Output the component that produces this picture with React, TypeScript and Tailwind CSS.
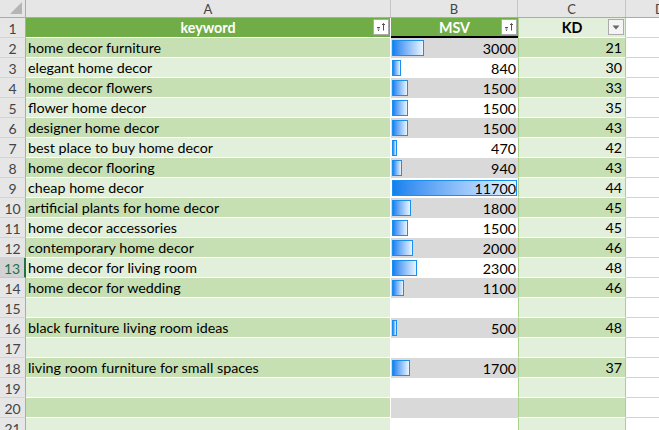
import React from "react";

type Row = { kw?: string; msv?: number; kd?: number };

const rows: Row[] = [
  { kw: "home decor furniture", msv: 3000, kd: 21 },
  { kw: "elegant home decor", msv: 840, kd: 30 },
  { kw: "home decor flowers", msv: 1500, kd: 33 },
  { kw: "flower home decor", msv: 1500, kd: 35 },
  { kw: "designer home decor", msv: 1500, kd: 43 },
  { kw: "best place to buy home decor", msv: 470, kd: 42 },
  { kw: "home decor flooring", msv: 940, kd: 43 },
  { kw: "cheap home decor", msv: 11700, kd: 44 },
  { kw: "artificial plants for home decor", msv: 1800, kd: 45 },
  { kw: "home decor accessories", msv: 1500, kd: 45 },
  { kw: "contemporary home decor", msv: 2000, kd: 46 },
  { kw: "home decor for living room", msv: 2300, kd: 48 },
  { kw: "home decor for wedding", msv: 1100, kd: 46 },
  {},
  { kw: "black furniture living room ideas", msv: 500, kd: 48 },
  {},
  { kw: "living room furniture for small spaces", msv: 1700, kd: 37 },
  {},
  {},
  {},
];

const MAX = 11700;

function SortButton() {
  return (
    <div className="absolute right-[1px] top-[1px] w-[16px] h-[16px] bg-white border border-[#ababab] flex items-center justify-center">
      <svg width="12" height="12" viewBox="0 0 12 12">
        <path d="M2 6.5h3M2.5 8h2M3 9.5h1" stroke="#555" strokeWidth="1" />
        <path d="M8.5 2.5v7M7 4l1.5-1.5L10 4" stroke="#555" strokeWidth="1" fill="none" />
      </svg>
    </div>
  );
}

function DropButton() {
  return (
    <div className="absolute right-[1px] top-[1px] w-[16px] h-[16px] bg-[#f4f4f4] border border-[#ababab] flex items-center justify-center">
      <svg width="8" height="5" viewBox="0 0 8 5">
        <path d="M0.5 0.5h7L4 4.5z" fill="#666" />
      </svg>
    </div>
  );
}

export default function App() {
  return (
    <div
      className="w-[659px] h-[430px] overflow-hidden bg-white text-black text-[14.3px] leading-none"
      style={{ fontFamily: "Lato, 'Open Sans', sans-serif" }}
    >
      {/* column headers */}
      <div className="flex h-[18px] bg-[#e6e6e6] border-b border-[#ababab] text-[#444] text-[13px]">
        <div className="w-[26px] shrink-0 relative border-r border-[#ababab]">
          <div className="absolute right-[3px] bottom-[3px] w-0 h-0 border-l-[12px] border-l-transparent border-b-[12px] border-b-[#b5b5b5]" />
        </div>
        <div className="w-[365px] shrink-0 flex items-center justify-center pt-[1px] border-r border-[#c6c6c6]">A</div>
        <div className="w-[127px] shrink-0 flex items-center justify-center pt-[1px] border-r border-[#c6c6c6]">B</div>
        <div className="w-[108px] shrink-0 flex items-center justify-center pt-[1px] border-r border-[#c6c6c6]">C</div>
        <div className="flex-1 pl-[29px] pt-[1px] flex items-center">D</div>
      </div>

      {/* row 1: table header */}
      <div className="flex h-[20px]">
        <div className="w-[26px] shrink-0 bg-[#e6e6e6] border-r border-[#ababab] border-b border-b-[#d4d4d4] flex items-center justify-center pt-[2px] text-[14px] text-[#444]">
          1
        </div>
        <div className="w-[365px] shrink-0 relative bg-[#70ad47] border-r border-white border-b border-b-white flex items-center justify-center pt-[2px] font-bold text-white">
          keyword
          <SortButton />
        </div>
        <div className="w-[127px] shrink-0 relative bg-[#70ad47] border-b-2 border-b-black flex items-center justify-center pt-[2px] font-bold text-white">
          MSV
          <SortButton />
        </div>
        <div className="w-[108px] shrink-0 relative bg-[#e2efda] border-x border-[#a9d08e] border-b border-b-white flex items-center justify-center pt-[2px] font-bold">
          KD
          <DropButton />
        </div>
        <div className="flex-1 border-b border-[#d4d4d4]" />
      </div>

      {rows.map((r, i) => {
        const n = i + 2;
        const even = n % 2 === 0;
        const active = n === 13;
        return (
          <div key={n} className="flex h-[20px]">
            <div
              className={
                active
                  ? "w-[26px] shrink-0 bg-[#d2d2d2] border-r-2 border-[#217346] border-b border-b-[#c6c6c6] flex items-center justify-center pt-[2px] text-[14px] text-[#217346]"
                  : "w-[26px] shrink-0 bg-[#e6e6e6] border-r border-[#ababab] border-b border-b-[#d4d4d4] flex items-center justify-center pt-[2px] text-[14px] text-[#444]"
              }
            >
              {n}
            </div>
            <div
              className={
                (even ? "bg-[#c6e0b4]" : "bg-[#e2efda]") +
                " w-[365px] shrink-0 border-r border-white border-b border-b-white flex items-center pl-[2px] pt-[2px] whitespace-nowrap"
              }
            >
              {r.kw}
            </div>
            <div
              className={
                (even ? "bg-[#d9d9d9]" : "bg-white") +
                " w-[127px] shrink-0 relative flex items-center justify-end pr-[2px] pt-[2px]"
              }
            >
              {r.msv !== undefined && (
                <div
                  className="absolute left-[1px] top-[2px] h-[16px] border border-[#1a8ff0] bg-gradient-to-r from-[#0a80ee] to-[#eaf4fd]"
                  style={{ width: Math.max(4, Math.round((r.msv / MAX) * 125)) }}
                />
              )}
              <span className="relative">{r.msv}</span>
            </div>
            <div
              className={
                (even ? "bg-[#c6e0b4]" : "bg-[#e2efda]") +
                " w-[108px] shrink-0 border-x border-[#a9d08e] border-b border-b-white flex items-center justify-end pr-[3px] pt-[2px]"
              }
            >
              {r.kd}
            </div>
            <div className="flex-1 border-b border-[#d4d4d4]" />
          </div>
        );
      })}
    </div>
  );
}
